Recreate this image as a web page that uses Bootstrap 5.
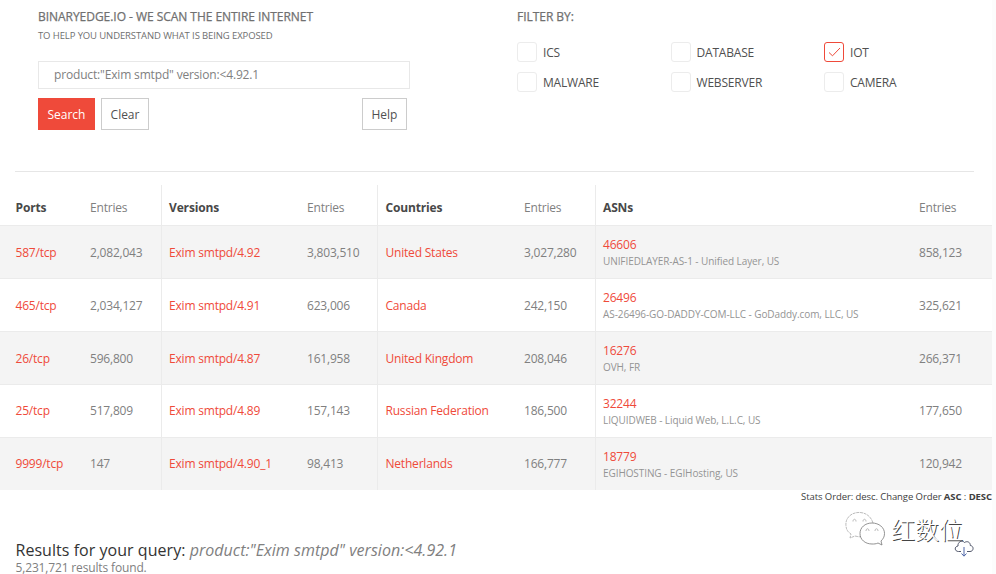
<!DOCTYPE html>
<html lang="en">
<head>
<meta charset="utf-8">
<meta name="viewport" content="width=device-width, initial-scale=1">
<title>BinaryEdge</title>
<link href="https://cdn.jsdelivr.net/npm/bootstrap@5.3.0/dist/css/bootstrap.min.css" rel="stylesheet">
<style>
body{font-family:"Open Sans",sans-serif;font-size:12px;line-height:18px;color:#808080;background:#fcfcfc;overflow:hidden;letter-spacing:-.2px}
.page{width:992px;height:574px;background:#fff}
.top-area{height:171px;padding:7px 15px 0 38px}
.search-col{width:479px}
.title{font-size:12px;line-height:19px;font-weight:400;color:#707070;margin:0;letter-spacing:-.04px;-webkit-text-stroke:.25px #707070}
.subtitle{font-size:9.5px;line-height:17px;padding-top:1px;color:#707070;letter-spacing:-.11px}
.query{width:372px;height:28px;margin-top:17px;border:1px solid #e8e8e8;border-radius:0;font-size:12px;line-height:18px;padding:3px 15px 5px;color:#808080;letter-spacing:-.16px}
.actions{width:369px;margin-top:9px;gap:6px}
.actions .btn{height:32px;border-radius:0;font-size:12px;line-height:18px;padding:7px 0 5px;width:48px;border:1px solid #ccc;color:#505050;background:#fff;letter-spacing:-.02px}
.actions .btn.go{width:57px;background:#ef4a3a;border-color:#ef4a3a;color:#fff}
.actions .btn.ms-auto{width:45px}
.filters{display:grid;grid-template-columns:153.500px 153.500px 120px;row-gap:10px;margin-top:16px;font-size:12px;color:#505050}
.filters label{height:20px;gap:6px;line-height:21px}
.filters .form-check-input{width:20px;height:20px;margin:0;border:1px solid #ececec;border-radius:3px;background-color:#fff}
.tick{width:20px;height:20px;border:1px solid #ef4a3a;border-radius:3px}
.rule{height:1px;margin:0 18px 0 15px;background:#e6e6e6}
.stats{width:992px;table-layout:fixed;margin:13px 0 0;color:inherit}
.stats th,.stats td{padding:0 0 0 7.500px;vertical-align:middle;border:0;color:#808080;background:transparent;box-shadow:none;font-weight:400}
.stats th:nth-child(even),.stats td:nth-child(even){padding-left:7px}
.stats th:nth-child(5),.stats td:nth-child(5){padding-left:8px}
.stats th:first-child,.stats td:first-child{padding-left:15.500px}
.stats th{height:40px;padding-top:7px}
.stats td{height:53px;border-top:1px solid #ebebeb}
.stats tbody tr:nth-child(-n+3) td,.stats tbody td:nth-child(7){padding-top:2px}
.stats tbody tr:nth-child(odd) td{background:#f4f4f4}
.stats .edge{border-right:1px solid #ebebeb}
.stats th.name{font-weight:700;color:#484848;letter-spacing:-.15px}
.stats a{color:#ef4a3a;text-decoration:none}
.stats .org{display:block;font-size:10px;line-height:15px;color:#949494;letter-spacing:-.08px}
.order{font-size:9.5px;line-height:14px;color:#404040;text-align:right;letter-spacing:-.08px}
.results{padding:36px 15.500px 0}
.results h1{font-size:16px;line-height:20px;margin:0;font-weight:400;color:#333;letter-spacing:.04px}
.results em{color:#808080}
.results p{margin:1px 0 0;font-size:12px;line-height:13px;letter-spacing:-.15px}
.brand{left:845px;top:511px;gap:6px}
.brand span{font:300 24px/35px "Noto Sans CJK SC",sans-serif;color:#fff;letter-spacing:0;margin-left:-1px;text-shadow:1px 1px 0 #444}
.cloud{left:954px;top:539px}
</style>
</head>
<body>
<div class="page position-relative">
  <header class="top-area d-flex">
    <section class="search-col">
      <h2 class="title">BINARYEDGE.IO - WE SCAN THE ENTIRE INTERNET</h2>
      <div class="subtitle">TO HELP YOU UNDERSTAND WHAT IS BEING EXPOSED</div>
      <input class="form-control query" type="text" value='product:"Exim smtpd" version:&lt;4.92.1'>
      <div class="actions d-flex">
        <button class="btn go">Search</button>
        <button class="btn">Clear</button>
        <button class="btn ms-auto">Help</button>
      </div>
    </section>
    <section>
      <h2 class="title filter-title">FILTER BY:</h2>
      <div class="filters">
        <label class="d-flex"><input class="form-check-input" type="checkbox">ICS</label>
        <label class="d-flex"><input class="form-check-input" type="checkbox">DATABASE</label>
        <label class="d-flex"><svg class="tick" viewBox="0 0 18 18" fill="none" stroke="#ef4a3a"><path d="M4 9.500l3.500 3.300L15 5"/></svg>IOT</label>
        <label class="d-flex"><input class="form-check-input" type="checkbox">MALWARE</label>
        <label class="d-flex"><input class="form-check-input" type="checkbox">WEBSERVER</label>
        <label class="d-flex"><input class="form-check-input" type="checkbox">CAMERA</label>
      </div>
    </section>
  </header>
  <div class="rule"></div>
  <table class="table stats">
    <colgroup><col style="width:83px"><col style="width:78px"><col style="width:139px"><col style="width:77px"><col style="width:140px"><col style="width:78px"><col style="width:317px"><col style="width:80px"></colgroup>
    <thead><tr><th class="name">Ports</th><th class="edge">Entries</th><th class="name">Versions</th><th class="edge">Entries</th><th class="name">Countries</th><th class="edge">Entries</th><th class="name">ASNs</th><th>Entries</th></tr></thead>
    <tbody>
      <tr><td><a href="#">587/tcp</a></td><td class="edge">2,082,043</td><td><a href="#">Exim smtpd/4.92</a></td><td class="edge">3,803,510</td><td><a href="#">United States</a></td><td class="edge">3,027,280</td><td><a href="#">46606</a><span class="org">UNIFIEDLAYER-AS-1 - Unified Layer, US</span></td><td>858,123</td></tr>
      <tr><td><a href="#">465/tcp</a></td><td class="edge">2,034,127</td><td><a href="#">Exim smtpd/4.91</a></td><td class="edge">623,006</td><td><a href="#">Canada</a></td><td class="edge">242,150</td><td><a href="#">26496</a><span class="org">AS-26496-GO-DADDY-COM-LLC - GoDaddy.com, LLC, US</span></td><td>325,621</td></tr>
      <tr><td><a href="#">26/tcp</a></td><td class="edge">596,800</td><td><a href="#">Exim smtpd/4.87</a></td><td class="edge">161,958</td><td><a href="#">United Kingdom</a></td><td class="edge">208,046</td><td><a href="#">16276</a><span class="org">OVH, FR</span></td><td>266,371</td></tr>
      <tr><td><a href="#">25/tcp</a></td><td class="edge">517,809</td><td><a href="#">Exim smtpd/4.89</a></td><td class="edge">157,143</td><td><a href="#">Russian Federation</a></td><td class="edge">186,500</td><td><a href="#">32244</a><span class="org">LIQUIDWEB - Liquid Web, L.L.C, US</span></td><td>177,650</td></tr>
      <tr><td><a href="#">9999/tcp</a></td><td class="edge">147</td><td><a href="#">Exim smtpd/4.90_1</a></td><td class="edge">98,413</td><td><a href="#">Netherlands</a></td><td class="edge">166,777</td><td><a href="#">18779</a><span class="org">EGIHOSTING - EGIHosting, US</span></td><td>120,942</td></tr>
    </tbody>
  </table>
  <div class="order">Stats Order: desc. Change Order <b>ASC</b> : <b>DESC</b></div>
  <section class="results">
    <h1>Results for your query: <em>product:"Exim smtpd" version:&lt;4.92.1</em></h1>
    <p>5,231,721 results found.</p>
  </section>
  <div class="brand position-absolute d-flex">
    <svg width="41" height="36" viewBox="0 0 41 36" fill="#fff" stroke="#aaa" stroke-width=".8">
      <path d="M28 12C26 5 20 1 13 1.500 5 2 0 8 1 15c.4 4 2 6 5 8l-1 4 5-2c3 .8 5 1 7 .5" stroke-dasharray="3 .7"/>
      <path d="M27 12c-7 0-12 4.500-12 10.500S20 33 27 33c2 0 4 0 6-1l4 2-1-4c2-2 3.500-4 3.500-7.500C39.500 16.500 34 12 27 12z" stroke="#777"/>
      <path d="M8 10.500c0-3 3-3 3 0M18 10.500c0-3 3-3 3 0M21 20c0-3 3-3 3 0M30 20c0-3 3-3 3 0" fill="none"/>
    </svg>
    <span>红数位</span>
  </div>
  <svg class="cloud position-absolute" width="21" height="19" viewBox="0 0 21 19" fill="none" stroke="#50566a">
    <path d="M7 12.500H4.500C.5 12.500 0 7.500 4 7 3.500 3 8 .5 10.500 3.500c3-2 6 0 5.800 3 4 .5 3.500 6-.3 6H13"/>
    <path d="M10 8v9M7.500 14.500L10 17.200l2.500-2.700" stroke="#4e66a8"/>
  </svg>
</div>
<script src="https://cdn.jsdelivr.net/npm/bootstrap@5.3.0/dist/js/bootstrap.bundle.min.js"></script>
</body>
</html>
